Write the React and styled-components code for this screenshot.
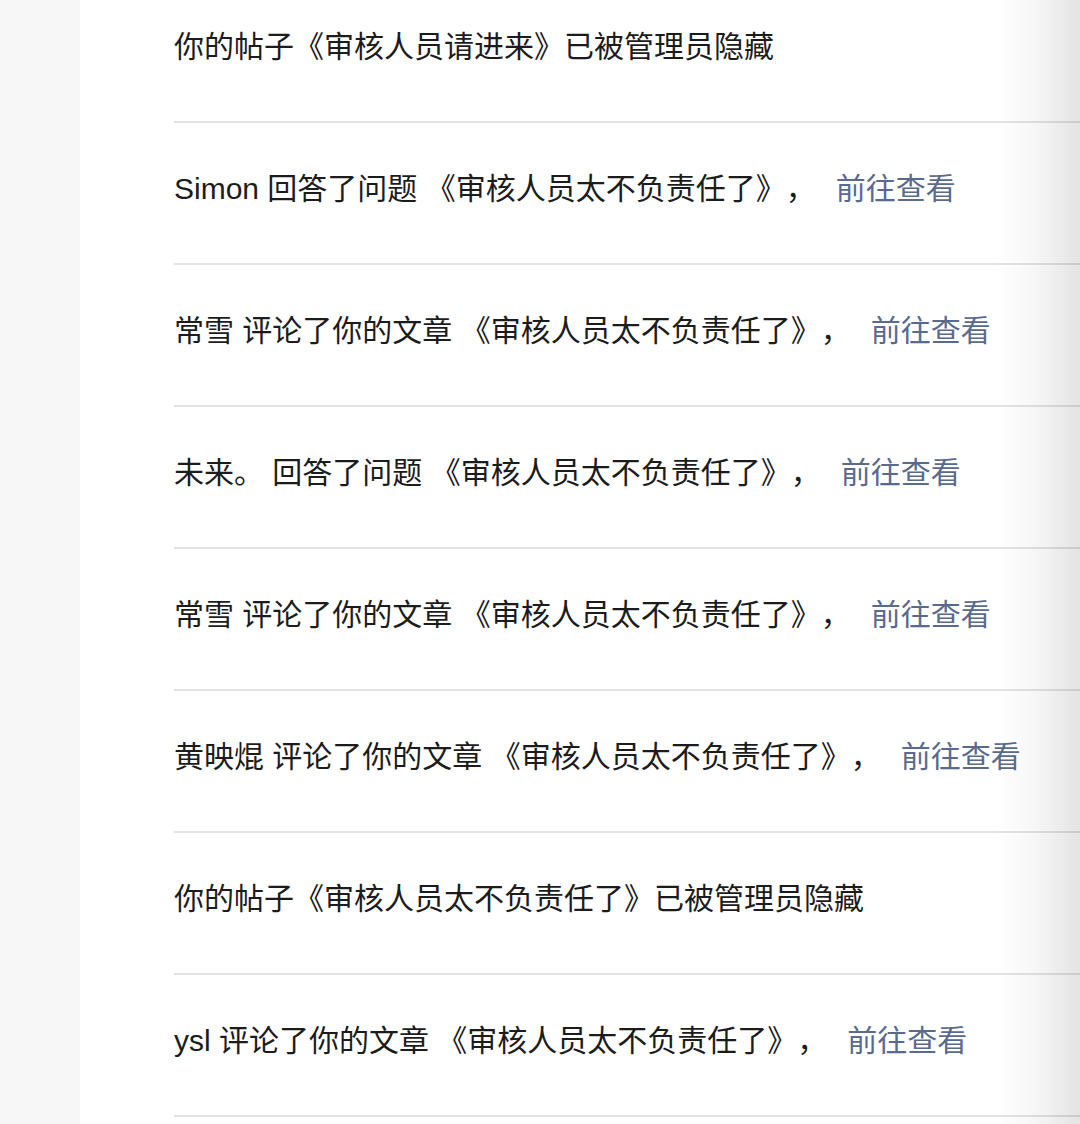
import styled, { createGlobalStyle } from "styled-components";

const GlobalStyle = createGlobalStyle`
  html, body {
    margin: 0;
    padding: 0;
    background: #f7f7f7;
  }
  body {
    font-family: "Liberation Sans", "Noto Sans CJK SC", sans-serif;
    -webkit-font-smoothing: antialiased;
  }
`;

const Page = styled.div`
  display: flex;
  min-height: 100vh;
  height: 1124px;
  overflow: hidden;
`;

const Gutter = styled.div`
  width: 80px;
  flex-shrink: 0;
  background: #f7f7f7;
`;

const Panel = styled.main`
  position: relative;
  flex: 1;
  background: #fff;
  overflow: hidden;
`;

const EdgeShade = styled.div`
  position: absolute;
  top: 0;
  right: 0;
  bottom: 0;
  width: 84px;
  pointer-events: none;
  background: linear-gradient(
    to right,
    rgba(0, 0, 0, 0) 0%,
    rgba(0, 0, 0, 0.03) 45%,
    rgba(0, 0, 0, 0.11) 100%
  );
`;

/* the list is scrolled a little: first row is cut at the top */
const List = styled.ul`
  list-style: none;
  margin: -19px 0 0 0;
  padding: 0;
`;

const Row = styled.li`
  margin-left: 94px;
  padding: 51px 0 59px;
  border-bottom: 2px solid #e3e3e3;
  font-size: 30px;
  line-height: 30px;
  color: #1c1c1c;
  white-space: nowrap;
  text-spacing-trim: space-all;
`;

const GoLink = styled.a`
  margin-left: 20px;
  color: #5a6a8e;
  text-decoration: none;
  cursor: pointer;
`;

const notices = [
  { text: "你的帖子《审核人员请进来》已被管理员隐藏" },
  { text: "Simon 回答了问题 《审核人员太不负责任了》，", link: true },
  { text: "常雪 评论了你的文章 《审核人员太不负责任了》，", link: true },
  { text: "未来。 回答了问题 《审核人员太不负责任了》，", link: true },
  { text: "常雪 评论了你的文章 《审核人员太不负责任了》，", link: true },
  { text: "黄映焜 评论了你的文章 《审核人员太不负责任了》，", link: true },
  { text: "你的帖子《审核人员太不负责任了》已被管理员隐藏" },
  { text: "ysl 评论了你的文章 《审核人员太不负责任了》，", link: true },
  { text: "" },
];

export default function App() {
  return (
    <>
      <GlobalStyle />
      <Page>
        <Gutter />
        <Panel>
          <List>
            {notices.map((n, i) => (
              <Row key={i}>
                {n.text || "\u00a0"}
                {n.link && <GoLink>前往查看</GoLink>}
              </Row>
            ))}
          </List>
          <EdgeShade />
        </Panel>
      </Page>
    </>
  );
}
